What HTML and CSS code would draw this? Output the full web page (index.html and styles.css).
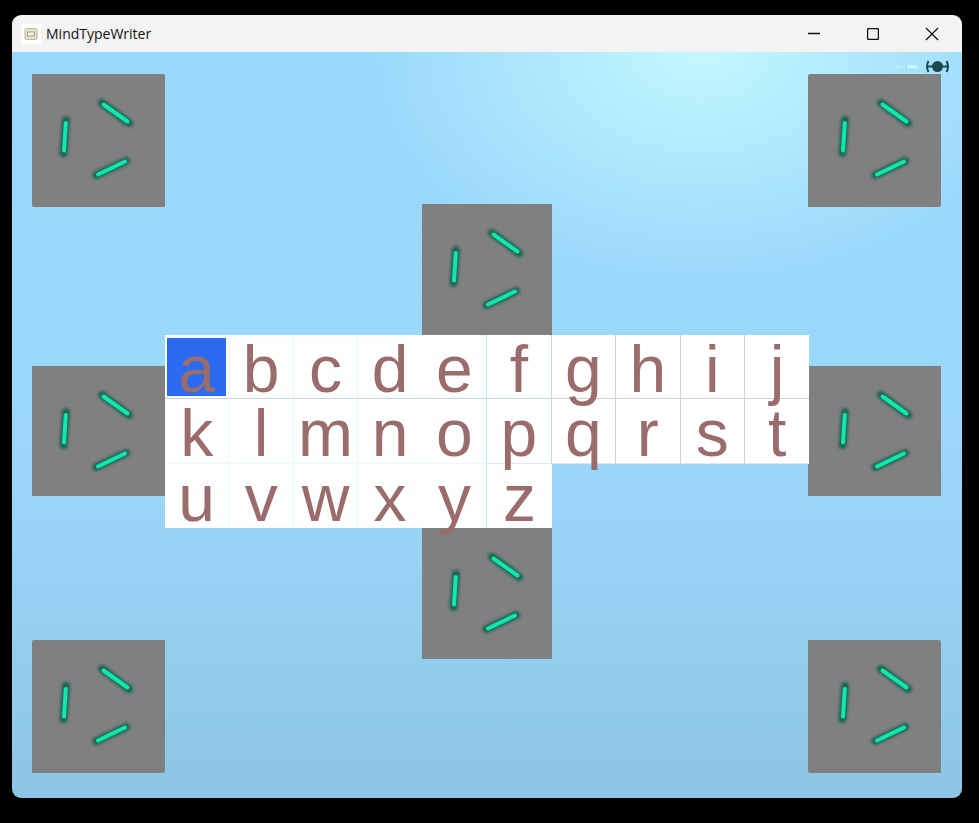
FILE: index.html
```html
<!DOCTYPE html>
<html lang="en">

<head>
    <meta charset="UTF-8">
    <title>MindTypeWriter</title>
    <link rel="stylesheet" href="styles.css">
</head>

<body>
    <svg class="defs" width="0" height="0">
        <defs>
            <filter id="glow" x="-40%" y="-40%" width="180%" height="180%">
                <feGaussianBlur stdDeviation="1.800" />
            </filter>
            <filter id="soft" x="-40%" y="-40%" width="180%" height="180%">
                <feGaussianBlur stdDeviation="0.500" />
            </filter>
            <symbol id="bars" viewBox="0 0 133 132">
                <path class="bar-glow" d="M70 29L97 49M34 46L31.500 79M94 87L64.500 101" filter="url(#glow)" />
                <path class="bar-core" d="M71.500 30.500L95.500 47.500M33.800 49L32 76.500M93 87.500L66 100.500" filter="url(#soft)" />
            </symbol>
        </defs>
    </svg>

    <div class="window">
        <div class="titlebar">
            <div class="app-title">
                <span class="app-icon">
                    <svg width="20" height="20" viewBox="0 0 20 20">
                        <rect x="4" y="4.500" width="12" height="11" rx="1.500" fill="#e6e3cc" stroke="#b9b692" />
                        <rect x="6.500" y="8" width="7" height="4" fill="#f4f2e4" stroke="#8f8f80" stroke-width="0.800" />
                    </svg>
                </span>
                <span>MindTypeWriter</span>
            </div>
            <div class="controls">
                <button class="control">
                    <svg width="12" height="12" viewBox="0 0 12 12"><path d="M0 5.500H12" /></svg>
                </button>
                <button class="control">
                    <svg width="12" height="12" viewBox="0 0 12 12"><rect x="0.600" y="0.600" width="10.800" height="10.800" rx="1" /></svg>
                </button>
                <button class="control">
                    <svg width="14" height="14" viewBox="0 0 14 14"><path d="M1 1L13 13M13 1L1 13" /></svg>
                </button>
            </div>
        </div>

        <div class="stage">
            <svg class="status" width="56" height="14" viewBox="0 0 56 14">
                <path d="M2 7H9" stroke="#c6f4fa" fill="none" />
                <rect x="14" y="5" width="10" height="4" fill="#c8f6fd" />
                <path d="M13.500 5V9.500H24" stroke="#7fe6f5" fill="none" />
                <path d="M35.500 1Q32.500 6.500 35.500 12M53.500 1Q56.500 6.500 53.500 12M34 6.500H55" stroke="#1d4850" stroke-width="2" fill="none" />
                <circle cx="44.500" cy="6.500" r="5.500" fill="#1d4850" />
            </svg>

            <div class="tile tile-tl"><svg><use href="#bars" /></svg></div>
            <div class="tile tile-tr"><svg><use href="#bars" /></svg></div>
            <div class="tile tile-ml"><svg><use href="#bars" /></svg></div>
            <div class="tile tile-mr"><svg><use href="#bars" /></svg></div>
            <div class="tile tile-bl"><svg><use href="#bars" /></svg></div>
            <div class="tile tile-br"><svg><use href="#bars" /></svg></div>
            <div class="tile tile-top"><svg><use href="#bars" /></svg></div>
            <div class="tile tile-bottom"><svg><use href="#bars" /></svg></div>

            <div class="keyboard">
                <div class="key selected"><span>a</span></div>
                <div class="key"><span>b</span></div>
                <div class="key"><span>c</span></div>
                <div class="key"><span>d</span></div>
                <div class="key"><span>e</span></div>
                <div class="key"><span>f</span></div>
                <div class="key"><span>g</span></div>
                <div class="key"><span>h</span></div>
                <div class="key"><span>i</span></div>
                <div class="key"><span>j</span></div>
                <div class="key"><span>k</span></div>
                <div class="key"><span>l</span></div>
                <div class="key"><span>m</span></div>
                <div class="key"><span>n</span></div>
                <div class="key"><span>o</span></div>
                <div class="key"><span>p</span></div>
                <div class="key"><span>q</span></div>
                <div class="key"><span>r</span></div>
                <div class="key"><span>s</span></div>
                <div class="key"><span>t</span></div>
                <div class="key"><span>u</span></div>
                <div class="key"><span>v</span></div>
                <div class="key"><span>w</span></div>
                <div class="key"><span>x</span></div>
                <div class="key"><span>y</span></div>
                <div class="key"><span>z</span></div>
            </div>
        </div>
    </div>
</body>

</html>
```

FILE: styles.css
```css
html,
body {
    height: 100%;
}

body {
    margin: 0;
    padding: 15px 17px 25px 12px;
    box-sizing: border-box;
    background-color: #000;
    font-family: "Open Sans", "Noto Sans", sans-serif;
}

.defs {
    position: absolute;
}

.window {
    display: flex;
    flex-direction: column;
    height: 783px;
    border-radius: 9px;
    overflow: hidden;
}

.titlebar {
    display: flex;
    justify-content: space-between;
    align-items: center;
    height: 37px;
    flex: none;
    background-color: #f3f3f3;
}

.app-title {
    display: flex;
    align-items: center;
    gap: 5px;
    padding-left: 9px;
    font-size: 14px;
    color: #111;
}

.app-icon {
    display: flex;
    background-color: #fff;
}

.controls {
    display: flex;
    padding-right: 1px;
}

.control {
    display: flex;
    align-items: center;
    justify-content: center;
    width: 59px;
    height: 37px;
    padding: 0;
    border: none;
    background: none;
}

.control svg {
    fill: none;
    stroke: #111;
    stroke-width: 1.300;
}

.stage {
    position: relative;
    flex: 1;
    background:
        radial-gradient(ellipse 340px 230px at 690px 0, #c3f8ff 0%, rgba(195, 248, 255, 0) 100%),
        linear-gradient(#99d8fb 0%, #9bd9fb 45%, #96d2f3 70%, #8dc5e5 100%);
}

.status {
    position: absolute;
    top: 8px;
    right: 13px;
}

.tile {
    position: absolute;
    width: 133px;
    height: 132.500px;
    background-color: #808080;
}

.tile svg {
    display: block;
    width: 133px;
    height: 132px;
}

.bar-glow {
    fill: none;
    stroke: #1a6352;
    stroke-width: 8;
    stroke-linecap: round;
}

.bar-core {
    fill: none;
    stroke: #0ce8ac;
    stroke-width: 4;
    stroke-linecap: round;
}

.tile-tl,
.tile-tr {
    top: 22px;
}

.tile-ml,
.tile-mr {
    top: 314px;
    height: 130px;
}

.tile-bl,
.tile-br {
    top: 588px;
}

.tile-tl,
.tile-br {
    border-top-right-radius: 2px;
    border-bottom-left-radius: 2px;
}

.tile-tr,
.tile-bl {
    border-top-left-radius: 2px;
    border-bottom-right-radius: 2px;
}

.tile-tl,
.tile-ml,
.tile-bl {
    left: 20.300px;
}

.tile-tr,
.tile-mr,
.tile-br {
    left: 796.300px;
}

.tile-tr svg,
.tile-mr svg,
.tile-br svg {
    transform: translateX(3px);
}

.tile-top,
.tile-bottom {
    left: 410px;
    width: 130px;
    height: 131px;
}

.tile-top {
    top: 152px;
}

.tile-bottom {
    top: 476px;
}

.keyboard {
    position: absolute;
    top: 283px;
    left: 153px;
    display: grid;
    grid-template-columns: repeat(10, 64.450px);
    grid-auto-rows: 64.400px;
    font-family: "Liberation Sans", Arial, sans-serif;
    font-size: 66px;
    color: #9a6c6c;
}

.key {
    display: flex;
    justify-content: center;
    box-sizing: border-box;
    line-height: 68px;
    background-color: #fdffff;
    border-right: 1px solid #e8f5f9;
    border-bottom: 1px solid #f0f8fa;
}

/* letters hang over the row below */
.key span {
    position: relative;
    z-index: 1;
}

.key:nth-child(-n+10) {
    border-bottom-color: #c9d3d8;
}

.key:nth-child(n+7):nth-child(-n+10),
.key:nth-child(n+17):nth-child(-n+20) {
    background-color: #fff;
    border-right-color: #c9d3d8;
}

.key:nth-child(n+17):nth-child(-n+20),
.key:nth-child(16) {
    border-bottom-color: #dfe9ee;
}

.key:nth-child(4),
.key:nth-child(14),
.key:nth-child(24) {
    border-right-color: #fdffff;
}

.key:nth-child(5),
.key:nth-child(15),
.key:nth-child(25) {
    border-right-color: #bfeefa;
}

.key:nth-child(6),
.key:nth-child(16) {
    border-right-color: #c9d3d8;
}

.key:nth-child(n+21) {
    border-bottom: none;
}

.key:nth-child(10),
.key:nth-child(20),
.key:nth-child(26) {
    border-right: none;
}

.key.selected {
    padding: 3px 2px 2px;
    background: linear-gradient(#2a6bef, #2a6bef) content-box, #fdffff;
}

.key.selected span {
    margin-top: -3px;
}
```
